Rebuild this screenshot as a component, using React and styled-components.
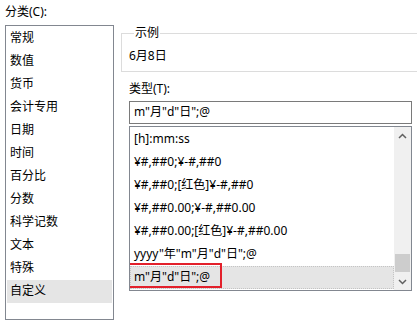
import React from "react";
import styled, { createGlobalStyle } from "styled-components";

const GlobalStyle = createGlobalStyle`
  html, body {
    margin: 0;
    padding: 0;
    background: #ffffff;
    overflow: hidden;
  }
  body {
    font-family: "Noto Sans", "Noto Sans CJK SC", sans-serif;
    font-size: 12px;
    color: #000;
  }
`;

const Dialog = styled.div`
  display: flex;
  width: 417px;
  height: 322px;
  padding: 4px 0 0 5px;
  box-sizing: border-box;
  overflow: hidden;
`;

const LeftColumn = styled.div`
  display: flex;
  flex-direction: column;
  width: 109px;
  flex-shrink: 0;
`;

const Label = styled.div`
  height: 18px;
  line-height: 16px;
  white-space: nowrap;
`;

const CategoryList = styled.ul`
  list-style: none;
  margin: 3px 0 0;
  padding: 1px;
  border: 1px solid #828790;
  box-sizing: border-box;
  height: 295px;
`;

const CategoryItem = styled.li`
  height: 23px;
  line-height: 22px;
  padding-left: 3px;
  background: ${(p) => (p.$selected ? "#e5e5e5" : "transparent")};
`;

const RightColumn = styled.div`
  display: flex;
  flex-direction: column;
  margin-left: 7px;
  padding-top: 22px;
  width: 300px;
  flex-shrink: 0;
`;

const SampleBox = styled.fieldset`
  margin: 0;
  padding: 8px 0 8px 7px;
  height: 46px;
  box-sizing: border-box;
  border: 1px solid #dcdcdc;
  width: 320px;
`;

const Legend = styled.legend`
  padding: 0 1px;
  margin-left: 5px;
  line-height: 14px;
`;

const SampleText = styled.div`
  line-height: 16px;
`;

const FormatSection = styled.div`
  display: flex;
  flex-direction: column;
  padding-left: 8px;
  margin-top: 9px;
`;

const FormatInput = styled.div`
  margin-top: 2px;
  width: 283px;
  height: 23px;
  box-sizing: border-box;
  border: 1px solid #7a7a7a;
  padding-left: 4px;
  line-height: 20px;
  white-space: nowrap;
`;

const FormatList = styled.div`
  position: relative;
  display: flex;
  margin-top: 2px;
  width: 283px;
  height: 165px;
  box-sizing: border-box;
  border: 1px solid #828790;
  overflow: hidden;
`;

const FormatItems = styled.ul`
  list-style: none;
  margin: 0;
  padding: 1px 0 0;
  flex: 1;
`;

const FormatItem = styled.li`
  position: relative;
  height: 23px;
  line-height: 22px;
  padding-left: 4px;
  white-space: nowrap;
  background: ${(p) => (p.$selected ? "#e5e5e5" : "transparent")};
  outline: ${(p) => (p.$selected ? "1px dotted #c4c4c4" : "none")};
  outline-offset: -1px;
`;

const Annotation = styled.span`
  position: absolute;
  left: -4px;
  top: -3px;
  width: 96px;
  height: 25px;
  box-sizing: border-box;
  border: 2px solid #e3202b;
`;

const ScrollBar = styled.div`
  display: flex;
  flex-direction: column;
  width: 17px;
  background: #f0f0f0;
`;

const ArrowButton = styled.div`
  display: flex;
  align-items: center;
  justify-content: center;
  height: 17px;
  color: #606060;
`;

const Track = styled.div`
  flex: 1;
  display: flex;
  flex-direction: column;
  justify-content: flex-end;
  padding-bottom: 1px;
`;

const Thumb = styled.div`
  height: 18px;
  margin: 0 1px;
  background: #cdcdcd;
`;

const Chevron = ({ up }) => (
  <svg width="9" height="6" viewBox="0 0 9 6">
    <polyline
      points={up ? "1,5 4.5,1.5 8,5" : "1,1 4.5,4.5 8,1"}
      fill="none"
      stroke="currentColor"
      strokeWidth="1.5"
    />
  </svg>
);

const categories = [
  "常规",
  "数值",
  "货币",
  "会计专用",
  "日期",
  "时间",
  "百分比",
  "分数",
  "科学记数",
  "文本",
  "特殊",
  "自定义",
];

const formats = [
  "[h]:mm:ss",
  "¥#,##0;¥-#,##0",
  "¥#,##0;[红色]¥-#,##0",
  "¥#,##0.00;¥-#,##0.00",
  "¥#,##0.00;[红色]¥-#,##0.00",
  'yyyy"年"m"月"d"日";@',
  'm"月"d"日";@',
];

export default function App() {
  return (
    <>
      <GlobalStyle />
      <Dialog>
        <LeftColumn>
          <Label>分类(C):</Label>
          <CategoryList>
            {categories.map((c) => (
              <CategoryItem key={c} $selected={c === "自定义"}>
                {c}
              </CategoryItem>
            ))}
          </CategoryList>
        </LeftColumn>
        <RightColumn>
          <SampleBox>
            <Legend>示例</Legend>
            <SampleText>6月8日</SampleText>
          </SampleBox>
          <FormatSection>
            <Label>类型(T):</Label>
            <FormatInput>m"月"d"日";@</FormatInput>
            <FormatList>
              <FormatItems>
                {formats.map((f, i) => (
                  <FormatItem key={f} $selected={i === formats.length - 1}>
                    {f}
                    {i === formats.length - 1 && <Annotation />}
                  </FormatItem>
                ))}
              </FormatItems>
              <ScrollBar>
                <ArrowButton>
                  <Chevron up />
                </ArrowButton>
                <Track>
                  <Thumb />
                </Track>
                <ArrowButton>
                  <Chevron />
                </ArrowButton>
              </ScrollBar>
            </FormatList>
          </FormatSection>
        </RightColumn>
      </Dialog>
    </>
  );
}
